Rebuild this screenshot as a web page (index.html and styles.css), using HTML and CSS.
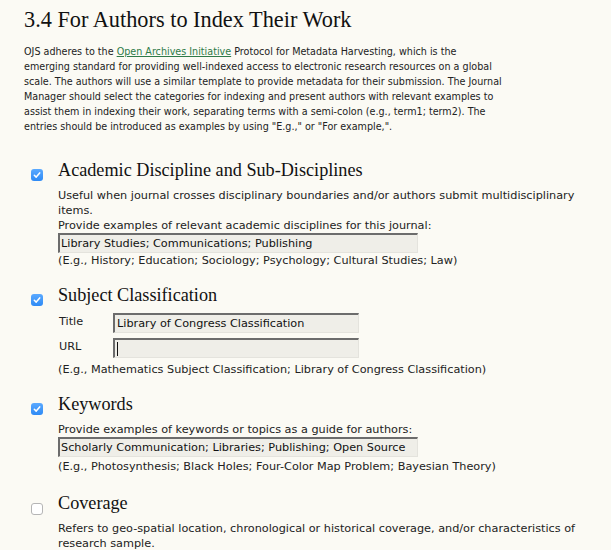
FILE: index.html
```html
<!DOCTYPE html>
<html>
<head>
<meta charset="utf-8">
<link rel="stylesheet" href="styles.css">
</head>
<body>
<div class="page">
  <h2 class="title">3.4 For Authors to Index Their Work</h2>
  <p class="intro">OJS adheres to the <a href="#">Open Archives Initiative</a> Protocol for Metadata Harvesting, which is the<br>emerging standard for providing well-indexed access to electronic research resources on a global<br>scale. The authors will use a similar template to provide metadata for their submission. The Journal<br>Manager should select the categories for indexing and present authors with relevant examples to<br>assist them in indexing their work, separating terms with a semi-colon (e.g., term1; term2). The<br>entries should be introduced as examples by using "E.g.," or "For example,".</p>

  <div class="section">
    <span class="check on"><svg viewBox="0 0 12 12" width="12" height="12"><path d="M3.3 6.2 L5.2 8.1 L8.7 3.9" fill="none" stroke="#fff" stroke-width="1.5" stroke-linecap="round" stroke-linejoin="round"/></svg></span>
    <div class="body">
      <h3 class="sec-title">Academic Discipline and Sub-Disciplines</h3>
      <p class="desc">Useful when journal crosses disciplinary boundaries and/or authors submit multidisciplinary items.</p>
      <p class="line">Provide examples of relevant academic disciplines for this journal:</p>
      <div class="field wide">Library Studies; Communications; Publishing</div>
      <p class="line">(E.g., History; Education; Sociology; Psychology; Cultural Studies; Law)</p>
    </div>
  </div>

  <div class="section">
    <span class="check on"><svg viewBox="0 0 12 12" width="12" height="12"><path d="M3.3 6.2 L5.2 8.1 L8.7 3.9" fill="none" stroke="#fff" stroke-width="1.5" stroke-linecap="round" stroke-linejoin="round"/></svg></span>
    <div class="body">
      <h3 class="sec-title">Subject Classification</h3>
      <div class="pair first">
        <span class="label">Title</span>
        <div class="field short">Library of Congress Classification</div>
      </div>
      <div class="pair">
        <span class="label">URL</span>
        <div class="field short"><span class="caret"></span></div>
      </div>
      <p class="line after-pair">(E.g., Mathematics Subject Classification; Library of Congress Classification)</p>
    </div>
  </div>

  <div class="section">
    <span class="check on"><svg viewBox="0 0 12 12" width="12" height="12"><path d="M3.3 6.2 L5.2 8.1 L8.7 3.9" fill="none" stroke="#fff" stroke-width="1.5" stroke-linecap="round" stroke-linejoin="round"/></svg></span>
    <div class="body">
      <h3 class="sec-title">Keywords</h3>
      <p class="line">Provide examples of keywords or topics as a guide for authors:</p>
      <div class="field wide">Scholarly Communication; Libraries; Publishing; Open Source</div>
      <p class="line low">(E.g., Photosynthesis; Black Holes; Four-Color Map Problem; Bayesian Theory)</p>
    </div>
  </div>

  <div class="section last">
    <span class="check off"></span>
    <div class="body">
      <h3 class="sec-title">Coverage</h3>
      <p class="desc">Refers to geo-spatial location, chronological or historical coverage, and/or characteristics of research sample.</p>
    </div>
  </div>
</div>
</body>
</html>
```

FILE: styles.css
```css
html, body {
  margin: 0;
  padding: 0;
  background: #fbfaf4;
}
body {
  font-family: "DejaVu Sans", Verdana, sans-serif;
  font-size: 11.25px;
  color: #222;
}
.page {
  padding: 7px 0 0 24px;
}
.title {
  font-family: "Liberation Serif", Georgia, serif;
  font-weight: normal;
  font-size: 22.3px;
  line-height: 26px;
  margin: 0 0 11px 0;
  color: #111;
}
.intro {
  margin: 0;
  width: 510px;
  font-size: 9.6px;
  line-height: 15px;
}
.intro a {
  color: #2f7a48;
  text-decoration: underline;
}
.section {
  display: flex;
  align-items: flex-start;
  margin-top: 16px;
}
.intro + .section {
  margin-top: 25px;
}
.section.last {
  margin-top: 18px;
}
.check {
  flex: none;
  width: 12px;
  height: 12px;
  margin: 10px 15px 0 7px;
  border-radius: 3px;
  box-sizing: border-box;
  display: flex;
}
.check.on {
  background: linear-gradient(#5aa9ff, #2e8af5);
}
.check.off {
  background: #fff;
  border: 1px solid #b5b5b5;
  margin-top: 11px;
}
.body {
  flex: 1;
}
.sec-title {
  font-family: "Liberation Serif", Georgia, serif;
  font-weight: normal;
  font-size: 18.2px;
  line-height: 22px;
  margin: 0 0 7px 0;
  color: #111;
}
.desc {
  margin: 0;
  width: 525px;
  line-height: 15px;
}
.line {
  margin: 0;
  line-height: 15px;
}
.line.low {
  margin-top: 2px;
}
.field {
  box-sizing: border-box;
  height: 20px;
  background: #efeee8;
  border-top: 2px solid #6c6c6c;
  border-left: 2px solid #6c6c6c;
  border-right: 1px solid #e4e3dd;
  border-bottom: 1px solid #e4e3dd;
  padding: 1px 0 0 1px;
  line-height: 15px;
  color: #111;
}
.field.wide {
  width: 360px;
}
.field.short {
  width: 246px;
  padding-left: 2px;
}
.pair {
  display: flex;
  align-items: flex-start;
  margin-top: 5px;
}
.pair.first {
  margin-top: 1px;
}
.label {
  width: 54px;
  flex: none;
  padding: 1px 0 0 1px;
  line-height: 15px;
}
.caret {
  display: inline-block;
  width: 1px;
  height: 14px;
  background: #111;
  vertical-align: middle;
}
.after-pair {
  margin-top: 4px;
}
```
